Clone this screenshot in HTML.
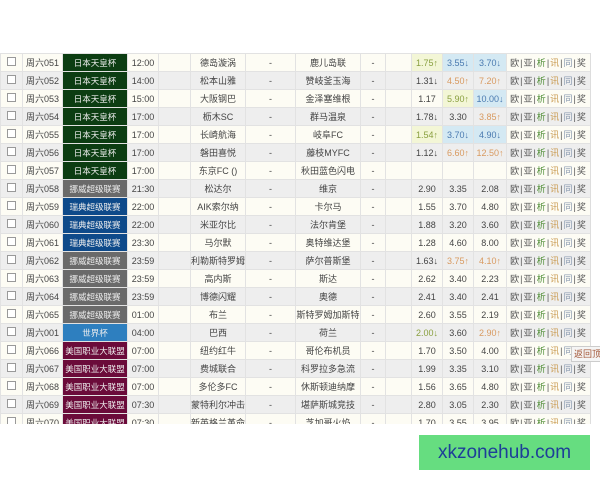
<!DOCTYPE html>
<html><head><meta charset="utf-8"><style>
body{margin:0;width:600px;height:480px;background:#fff;position:relative;overflow:hidden;font-family:"Liberation Sans","Noto Sans CJK SC",sans-serif}
#wrap{position:absolute;left:0;top:53px;width:600px;height:371px;overflow:hidden}
table{border-collapse:collapse;table-layout:fixed;width:590px;font-size:9px;color:#444}
td{height:17px;border:1px solid #e2e2e2;text-align:center;padding:0;white-space:nowrap;overflow:hidden}
tr.a td{background:#fdfcf4}tr.b td{background:#eeeeee}
td.lg{color:#eee;font-size:8.5px}
.g{background:#0c3d12!important}.n{background:#6a6a6a!important}.s{background:#0e4a8a!important}.w{background:#2e7fbf!important}.m{background:#6b0b3a!important}
.cb{display:inline-block;width:7px;height:7px;border:1px solid #999;background:#fff}
.y{background:#f3f6d6!important}.bl{background:#d4e9f3!important}
.gr{color:#8aa040}.or{color:#d89a60}.dn{color:#4a7ab0}
.lk{color:#555;letter-spacing:1px}
.lk i{font-style:normal;color:#4a8a30}.lk u{text-decoration:none;color:#c99a50}.lk s{text-decoration:none;color:#8a9ab0}
#sb{position:absolute;left:590px;top:53px;width:1px;height:371px;background:#ddd}
#tip{position:absolute;left:571px;top:346px;width:40px;height:14px;background:#f5f5f5;border:1px solid #ccc;font-size:9px;color:#a05030;line-height:14px;padding-left:2px}
#ad{position:absolute;left:419px;top:435px;width:171px;height:35px;background:#66dd80;color:#1d3f98;font-size:19px;line-height:35px;text-align:center}
</style></head><body>
<div id="wrap"><table>
<colgroup><col style="width:22px"><col style="width:40px"><col style="width:65px"><col style="width:31px"><col style="width:32px"><col style="width:55px"><col style="width:50px"><col style="width:65px"><col style="width:25px"><col style="width:26px"><col style="width:31px"><col style="width:31px"><col style="width:33px"><col style="width:84px"></colgroup>
<tbody id="tb"></tbody></table></div>
<div id="sb"></div>
<div id="tip">返回顶部</div>
<div id="ad">xkzonehub.com</div>
<script>
var L={g:"日本天皇杯",n:"挪威超级联赛",s:"瑞典超级联赛",w:"世界杯",m:"美国职业大联盟"};
var R=[
["051","g","12:00","德岛漩涡","鹿儿岛联",["1.75↑","y gr"],["3.55↓","bl dn"],["3.70↓","bl dn"]],
["052","g","14:00","松本山雅","赞岐釜玉海",["1.31↓",""],["4.50↑","or"],["7.20↑","or"]],
["053","g","15:00","大阪钢巴","金泽塞维根",["1.17",""],["5.90↑","y gr"],["10.00↓","bl dn"]],
["054","g","17:00","枥木SC","群马温泉",["1.78↓",""],["3.30",""],["3.85↑","or"]],
["055","g","17:00","长崎航海","岐阜FC",["1.54↑","y gr"],["3.70↓","bl dn"],["4.90↓","bl dn"]],
["056","g","17:00","磐田喜悦","藤枝MYFC",["1.12↓",""],["6.60↑","or"],["12.50↑","or"]],
["057","g","17:00","东京FC ()","秋田蓝色闪电",["",""],["",""],["",""]],
["058","n","21:30","松达尔","维京",["2.90",""],["3.35",""],["2.08",""]],
["059","s","22:00","AIK索尔纳","卡尔马",["1.55",""],["3.70",""],["4.80",""]],
["060","s","22:00","米亚尔比","法尔肯堡",["1.88",""],["3.20",""],["3.60",""]],
["061","s","23:30","马尔默","奥特维达堡",["1.28",""],["4.60",""],["8.00",""]],
["062","n","23:59","利勒斯特罗姆","萨尔普斯堡",["1.63↓",""],["3.75↑","or"],["4.10↑","or"]],
["063","n","23:59","高内斯","斯达",["2.62",""],["3.40",""],["2.23",""]],
["064","n","23:59","博德闪耀","奥德",["2.41",""],["3.40",""],["2.41",""]],
["065","n","01:00","布兰","斯特罗姆加斯特",["2.60",""],["3.55",""],["2.19",""]],
["001","w","04:00","巴西","荷兰",["2.00↓","gr"],["3.60",""],["2.90↑","or"]],
["066","m","07:00","纽约红牛","哥伦布机员",["1.70",""],["3.50",""],["4.00",""]],
["067","m","07:00","费城联合","科罗拉多急流",["1.99",""],["3.35",""],["3.10",""]],
["068","m","07:00","多伦多FC","休斯顿迪纳摩",["1.56",""],["3.65",""],["4.80",""]],
["069","m","07:30","蒙特利尔冲击","堪萨斯城竞技",["2.80",""],["3.05",""],["2.30",""]],
["070","m","07:30","新英格兰革命","芝加哥火焰",["1.70",""],["3.55",""],["3.95",""]]];
var h="";R.forEach(function(r,i){h+='<tr class="'+(i%2?'b':'a')+'"><td><span class="cb"></span></td><td>周六'+r[0]+'</td><td class="lg '+r[1]+'">'+L[r[1]]+'</td><td>'+r[2]+'</td><td></td><td>'+r[3]+'</td><td>-</td><td>'+r[4]+'</td><td>-</td><td></td>';
for(var k=5;k<8;k++)h+='<td class="'+r[k][1]+'">'+r[k][0]+'</td>';
h+='<td class="lk">欧|亚|<i>析</i>|<u>讯</u>|<s>同</s>|奖</td></tr>';});
document.getElementById("tb").innerHTML=h;
</script>
</body></html>
